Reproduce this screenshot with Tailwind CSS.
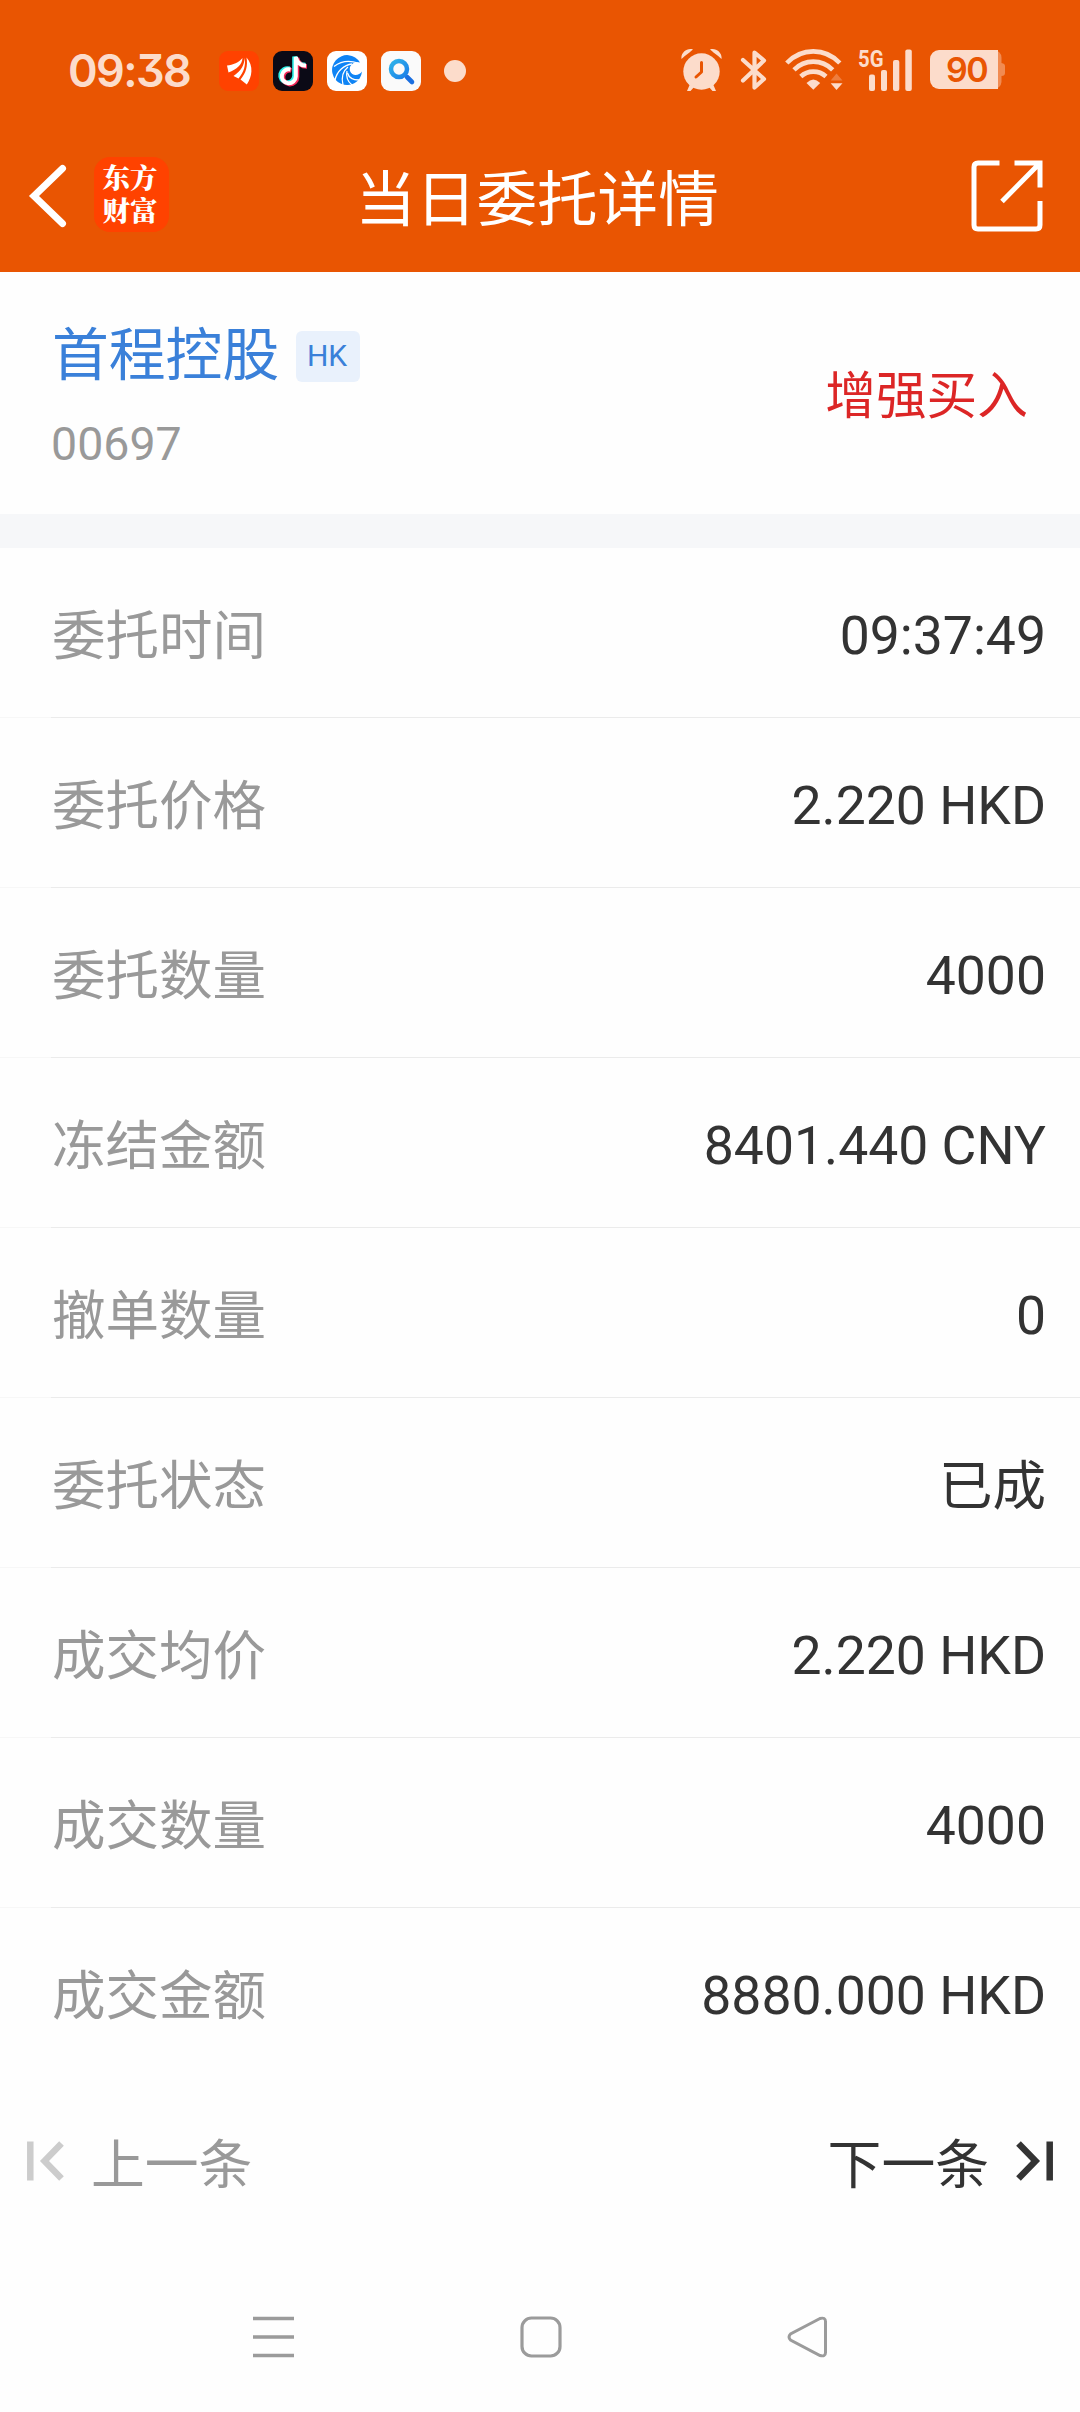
<!DOCTYPE html>
<html lang="zh-CN">
<head>
<meta charset="utf-8">
<title>当日委托详情</title>
<script src="https://cdn.jsdelivr.net/npm/@tailwindcss/browser@4"></script>
</head>
<body class="w-[1080px] h-[2412px] overflow-hidden bg-[#fefefe] flex flex-col leading-none text-[#333] font-[Roboto,'Noto_Sans_CJK_SC',sans-serif]">

<header class="h-[272px] bg-[#e95502] shrink-0">
  <!-- status bar -->
  <div class="h-[124px] pt-[18px] pl-[68px] pr-[75px] flex items-center justify-between text-[#fcdccb]">
    <div class="flex items-center">
      <span class="w-[151px] pb-0.5 text-[45px] font-semibold font-[Inter,sans-serif] [font-feature-settings:'cv09'] tracking-[-1.6px]">09:38</span>
      <div class="flex gap-3.5">
        <svg width="40" height="40" viewBox="0 0 40 40"><rect width="40" height="40" rx="9" fill="#ff4200"/><path d="M8 14.500C14 14 20 11.500 23.500 7C23 14 18 18 9.500 21.500Z" fill="#fff"/><path d="M25.500 7C25.500 14 22 20 14.500 25L19.500 27.500C25 21 27 14 25.500 7Z" fill="#fff"/><path d="M27.500 6.500C29 15 27 22 21.500 28.500L27.800 33.500C33 26 35 15 27.500 6.500Z" fill="#fff"/></svg>
        <svg width="40" height="40" viewBox="0 0 40 40"><rect width="40" height="40" rx="9" fill="#0b0a16"/><g fill="none" stroke-width="4.600"><path d="M16.500 17.800A7 7 0 1 0 21.500 25V5.500C22.500 10.500 27 14 32.500 14" stroke="#2ff0e8"/><path d="M18.500 19.300A7 7 0 1 0 24 26V7C25 12 28.500 15.500 34 15.500" stroke="#f5295a"/><path d="M17.500 18.500A7 7 0 1 0 22.800 25.500V6C24 11.500 27.500 14.500 33 14.800" stroke="#fff" stroke-width="4"/></g></svg>
        <svg width="40" height="40" viewBox="0 0 40 40"><rect width="40" height="40" rx="9" fill="#fff"/><path d="M33 11.500A15 15 0 1 0 35 20.500C32 25 25 25.500 23 20C21.500 14 27 10 33 11.500Z" fill="#0f84f5"/><g fill="none" stroke="#fff" stroke-width="1.300"><path d="M7 15.500C14 10 22 9 31 12"/><path d="M8 29C10 20 17 14 25 13"/><path d="M16 34C14 26 16 20 21 16"/><path d="M25 34C20 30 19 25 20 20"/><path d="M32 29C26 29 22 27 20.500 22"/></g></svg>
        <svg width="40" height="40" viewBox="0 0 40 40"><defs><linearGradient id="lens" x1="0" y1="0" x2="1" y2="1"><stop offset="0" stop-color="#2fb3ea"/><stop offset="1" stop-color="#1b7fe8"/></linearGradient></defs><rect width="40" height="40" rx="9" fill="#fafafa"/><path d="M26 26L31 31" stroke="#1b6fe0" stroke-width="4.600" stroke-linecap="round"/><circle cx="18" cy="18" r="8" fill="none" stroke="url(#lens)" stroke-width="4.500"/></svg>
      </div>
      <span class="ml-[23px] size-[22px] rounded-full bg-[#fcdccb]"></span>
    </div>

    <div class="flex items-center pb-0.5">
      <svg width="41" height="44" viewBox="0 0 41 44"><g fill="currentColor"><circle cx="20.500" cy="23.500" r="18.200"/><path d="M0.500 11C-.5 5 6 -.5 12 1.500Q10 3 8.500 4.500Q3.500 8 0.500 11ZM40.500 11C41.500 5 35 -.5 29 1.500Q31 3 32.500 4.500Q37.500 8 40.500 11Z"/><path d="M9 36L6 43H9.500L14 38ZM32 36L35 43H31.500L27 38Z"/></g><path d="M20.500 14.500V24L15 29" fill="none" stroke="#e95502" stroke-width="3" stroke-linecap="round" stroke-linejoin="round"/></svg>
      <svg class="ml-[18px]" width="28" height="44" viewBox="0 0 28 44"><path d="M3 12L24 31L14.500 39.500V4.500L24 12.500L3 32.500" fill="none" stroke="currentColor" stroke-width="4.200" stroke-linecap="round" stroke-linejoin="round"/></svg>
      <svg class="ml-[17px]" width="58" height="44" viewBox="0 0 58 44"><g fill="none" stroke="currentColor" stroke-width="4.600"><path d="M1.800 15Q13 3.400 28.300 3.400T54.800 15"/><path d="M9 21.800Q17 13.600 28.300 13.600T47.700 21.800"/><path d="M15.800 28.500Q21 23.600 28.300 23.600T41 28.500"/></g><path d="M21.500 35Q28.300 28 35.200 35L28.300 41.800Z" fill="currentColor"/><path d="M45.700 32.500H57.500L51.500 25.500Z" fill="currentColor" opacity=".3"/><path d="M45.700 35.300H57.500L51.500 42Z" fill="currentColor"/></svg>
      <svg class="ml-[15px] overflow-visible" width="55" height="44" viewBox="0 0 55 44" fill="currentColor"><text x="0" y="19" font-family="Roboto" font-weight="700" font-size="24.500" textLength="25.500" lengthAdjust="spacingAndGlyphs">5G</text><rect x="11" y="26.500" width="6" height="16.500" rx="2"/><rect x="23" y="22" width="6" height="21" rx="2"/><rect x="35" y="12" width="6.300" height="31" rx="2"/><rect x="47.300" y="1.500" width="6.500" height="41.500" rx="2"/></svg>
      <div class="ml-[17px] relative flex items-center">
        <svg width="75" height="40" viewBox="0 0 75 40"><path d="M60 0H64A7.500 7.500 0 0 1 71.500 7.500V13Q75 13.500 75 16V23Q75 26 71.500 26V32A7.500 7.500 0 0 1 64 39H60Z" fill="currentColor" opacity=".4"/><path d="M9 0H68V39H9A9 9 0 0 1 0 30V9A9 9 0 0 1 9 0Z" fill="currentColor"/></svg>
        <span class="absolute left-0 top-0 w-[73px] h-10 flex items-center justify-center text-[34px] font-semibold text-[#e95502] font-[Inter,sans-serif] tracking-[-1.5px]">90</span>
      </div>
    </div>
  </div>

  <!-- title bar -->
  <div class="h-[148px] pl-7 pr-[34px] grid grid-cols-[1fr_auto_1fr] items-start text-white">
    <div class="flex pt-[34px]">
      <svg class="mt-[5px]" width="42" height="66" viewBox="0 0 42 66"><path d="M34.500 5.500L6 33L34.500 60.500" fill="none" stroke="currentColor" stroke-width="7" stroke-linecap="round"/></svg>
      <div class="ml-6 -mt-px size-[75px] rounded-2xl bg-[#ff4200] flex flex-col items-center pt-[3px] pr-[3px] text-[27.5px] leading-[33px] font-black font-['Noto_Serif_CJK_SC','Noto_Sans_CJK_SC',sans-serif]"><span>东方</span><span>财富</span></div>
    </div>
    <h1 class="pt-[47px] text-[60.6px]">当日委托详情</h1>
    <svg class="justify-self-end mt-[34px]" width="78" height="76" viewBox="0 0 78 76"><g fill="none" stroke="currentColor" stroke-width="5"><path d="M31.500 5H10Q6 5 6 9V67Q6 71 10 71H68Q72 71 72 67V43"/><path d="M46.500 5H72V29.500M72 5L34 43.500"/></g></svg>
  </div>
</header>

<main class="flex flex-col">
  <section class="h-[242px] pl-[52px] pr-[52px] flex items-start justify-between">
    <div>
      <div class="mt-[56px] flex items-center">
        <h2 class="w-[226px] whitespace-nowrap text-[56.8px] text-[#3a80d9]">首程控股</h2>
        <span class="ml-[18px] w-16 h-[51px] pr-0.5 rounded-md bg-[#e9f1fc] text-[#3a80d9] text-[30px] flex items-center justify-center">HK</span>
      </div>
      <p class="mt-[36px] -ml-px text-[46.5px] text-[#999]">00697</p>
    </div>
    <p class="mt-[100px] text-[50.7px] text-[#dc2626]">增强买入</p>
  </section>
  <div class="h-[34px] bg-[#f6f7f9]"></div>

  <dl class="text-[53.5px] text-[#333]">
    <div class="h-[170px] bg-linear-to-r from-[#f7f7f7] from-[51px] to-[#ebebeb] to-[51px] pb-px"><div class="h-full bg-[#fefefe] pl-[52px] pr-[34px] pt-1.5 flex items-center justify-between"><dt class="text-[#999] pt-[3px]">委托时间</dt><dd>09:37:49</dd></div></div>
    <div class="h-[170px] bg-linear-to-r from-[#f7f7f7] from-[51px] to-[#ebebeb] to-[51px] pb-px"><div class="h-full bg-[#fefefe] pl-[52px] pr-[34px] pt-1.5 flex items-center justify-between"><dt class="text-[#999] pt-[3px]">委托价格</dt><dd>2.220 HKD</dd></div></div>
    <div class="h-[170px] bg-linear-to-r from-[#f7f7f7] from-[51px] to-[#ebebeb] to-[51px] pb-px"><div class="h-full bg-[#fefefe] pl-[52px] pr-[34px] pt-1.5 flex items-center justify-between"><dt class="text-[#999] pt-[3px]">委托数量</dt><dd>4000</dd></div></div>
    <div class="h-[170px] bg-linear-to-r from-[#f7f7f7] from-[51px] to-[#ebebeb] to-[51px] pb-px"><div class="h-full bg-[#fefefe] pl-[52px] pr-[34px] pt-1.5 flex items-center justify-between"><dt class="text-[#999] pt-[3px]">冻结金额</dt><dd>8401.440 CNY</dd></div></div>
    <div class="h-[170px] bg-linear-to-r from-[#f7f7f7] from-[51px] to-[#ebebeb] to-[51px] pb-px"><div class="h-full bg-[#fefefe] pl-[52px] pr-[34px] pt-1.5 flex items-center justify-between"><dt class="text-[#999] pt-[3px]">撤单数量</dt><dd>0</dd></div></div>
    <div class="h-[170px] bg-linear-to-r from-[#f7f7f7] from-[51px] to-[#ebebeb] to-[51px] pb-px"><div class="h-full bg-[#fefefe] pl-[52px] pr-[34px] pt-1.5 flex items-center justify-between"><dt class="text-[#999] pt-[3px]">委托状态</dt><dd class="pt-[3px]">已成</dd></div></div>
    <div class="h-[170px] bg-linear-to-r from-[#f7f7f7] from-[51px] to-[#ebebeb] to-[51px] pb-px"><div class="h-full bg-[#fefefe] pl-[52px] pr-[34px] pt-1.5 flex items-center justify-between"><dt class="text-[#999] pt-[3px]">成交均价</dt><dd>2.220 HKD</dd></div></div>
    <div class="h-[170px] bg-linear-to-r from-[#f7f7f7] from-[51px] to-[#ebebeb] to-[51px] pb-px"><div class="h-full bg-[#fefefe] pl-[52px] pr-[34px] pt-1.5 flex items-center justify-between"><dt class="text-[#999] pt-[3px]">成交数量</dt><dd>4000</dd></div></div>
    <div class="h-[170px] pb-px"><div class="h-full pl-[52px] pr-[34px] pt-1.5 flex items-center justify-between"><dt class="text-[#999] pt-[3px]">成交金额</dt><dd>8880.000 HKD</dd></div></div>
  </dl>
</main>

<!-- previous / next record -->
<nav class="h-[166px] px-[26px] flex items-center justify-between text-[53.8px]">
  <div class="flex items-center text-[#999]">
    <svg width="40" height="42" viewBox="0 0 40 42" fill="none" stroke="#ccc" stroke-width="6.500"><path d="M4.300 1.500V40.500M35.500 3.500L18.500 21L35.500 38.500"/></svg>
    <span class="ml-[25px] pt-[9px]">上一条</span>
  </div>
  <div class="flex items-center">
    <span class="mr-[25px] pt-[9px]">下一条</span>
    <svg width="40" height="42" viewBox="0 0 40 42" fill="none" stroke="#333" stroke-width="6.500"><path d="M35.700 1.500V40.500M4.500 3.500L21.500 21L4.500 38.500"/></svg>
  </div>
</nav>

<!-- system navigation -->
<footer class="mt-[70px] h-[46px] pl-[252px] pr-[251px] flex items-center justify-between text-[#9b9b9b]">
  <svg width="43" height="44" viewBox="0 0 43 44"><path d="M1 3.500H42M1 22H42M1 40.500H42" stroke="currentColor" stroke-width="3.500"/></svg>
  <svg width="43" height="44" viewBox="0 0 43 44"><rect x="3" y="3" width="38" height="38" rx="9.500" fill="none" stroke="currentColor" stroke-width="3.200"/></svg>
  <svg width="43" height="44" viewBox="0 0 43 44"><path d="M34 3.500L4.500 19Q1.500 22 4.500 25L34 40.500Q39.500 42 39.500 37.500V6.500Q39.500 2 34 3.500Z" fill="none" stroke="currentColor" stroke-width="3"/></svg>
</footer>
</body>
</html>
